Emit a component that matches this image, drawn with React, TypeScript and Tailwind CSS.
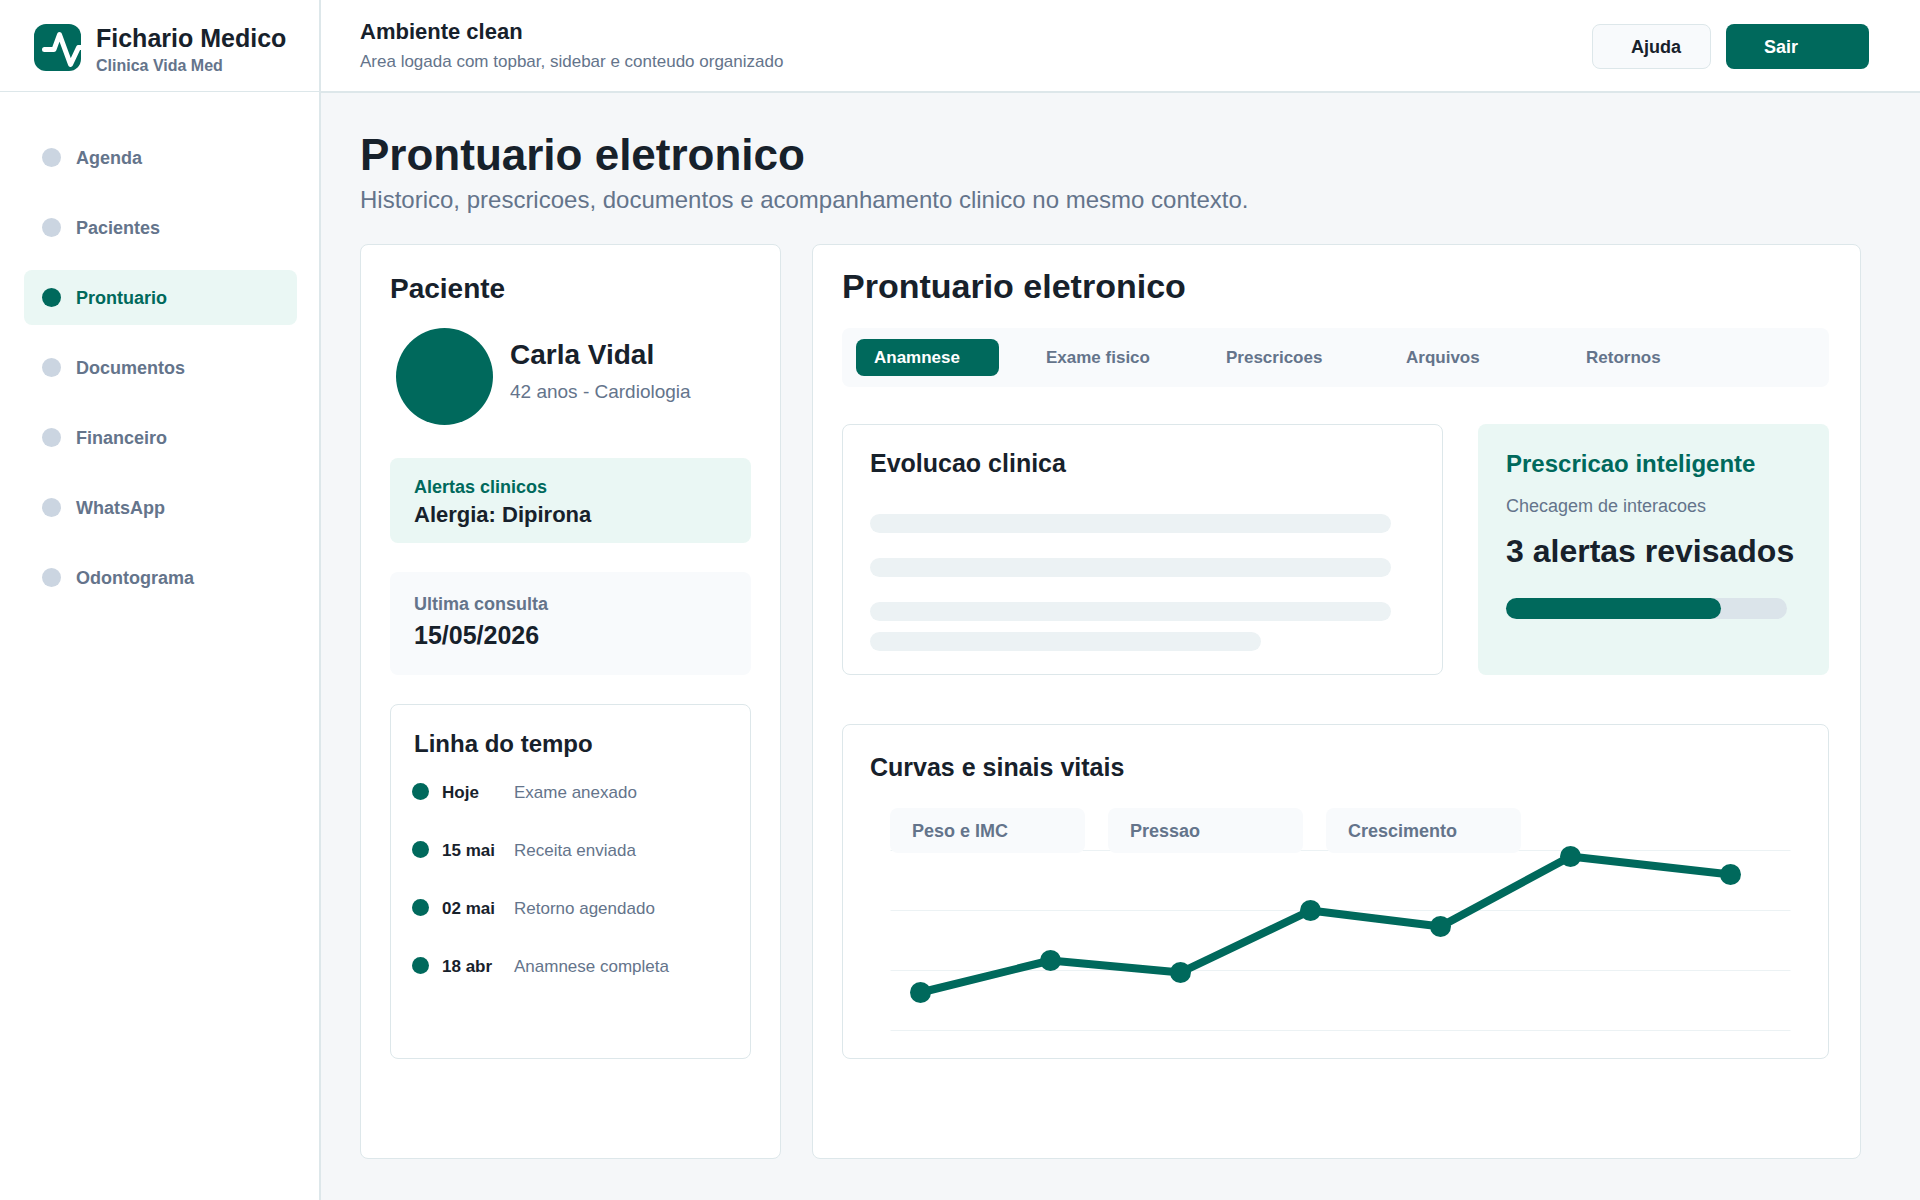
import React from 'react'

const menu = ['Agenda', 'Pacientes', 'Prontuario', 'Documentos', 'Financeiro', 'WhatsApp', 'Odontograma']

const tabs = ['Anamnese', 'Exame fisico', 'Prescricoes', 'Arquivos', 'Retornos']

const timeline = [
  { date: 'Hoje', text: 'Exame anexado' },
  { date: '15 mai', text: 'Receita enviada' },
  { date: '02 mai', text: 'Retorno agendado' },
  { date: '18 abr', text: 'Anamnese completa' },
]

const charts = ['Peso e IMC', 'Pressao', 'Crescimento']

const points = [
  [30, 184],
  [160, 152],
  [290, 164],
  [420, 102],
  [550, 118],
  [680, 48],
  [840, 66],
]

const Logo = () => (
  <svg viewBox="0 0 47 47" className="h-[47px] w-[47px] shrink-0" aria-hidden="true">
    <rect width="47" height="47" rx="12" fill="#00695c" />
    <path
      d="M10.5 25.5H20L25.5 10.5L36.5 40.5L44.5 23.5H47"
      fill="none"
      stroke="#fff"
      strokeWidth="5"
      strokeLinecap="round"
      strokeLinejoin="round"
    />
  </svg>
)

const Sidebar = () => (
  <aside className="w-[321px] shrink-0 border-r-2 border-[#dde7ea] bg-white">
    <div className="flex h-[92px] items-start gap-[15px] border-b border-[#dde7ea] pt-6 pl-[34px]">
      <Logo />
      <div className="leading-7 font-bold whitespace-nowrap">
        <p className="text-[25px]">Fichario Medico</p>
        <p className="text-[16px] text-[#64748b]">Clinica Vida Med</p>
      </div>
    </div>
    <nav className="flex flex-col gap-[15px] pt-[38px] pr-[22px] pl-6">
      {menu.map((item) => {
        const active = item === 'Prontuario'
        return (
          <a
            key={item}
            href="#"
            className={`flex h-[55px] items-center gap-[15px] rounded-lg pl-[18px] text-[18px] font-bold ${
              active ? 'bg-[#eaf7f4] text-[#00695c]' : 'text-[#64748b]'
            }`}
          >
            <span className={`h-[19px] w-[19px] rounded-full ${active ? 'bg-[#00695c]' : 'bg-[#cbd5e1]'}`} />
            <span className="pt-[2px]">{item}</span>
          </a>
        )
      })}
    </nav>
  </aside>
)

const Topbar = () => (
  <header className="flex h-[93px] items-start justify-between border-b-2 border-[#dde7ea] bg-white pr-[51px] pl-[39px]">
    <div className="pt-[17px] leading-[30px]">
      <p className="text-[22px] font-bold">Ambiente clean</p>
      <p className="text-[17px] text-[#64748b]">Area logada com topbar, sidebar e conteudo organizado</p>
    </div>
    <div className="flex gap-[15px] pt-6 text-[18px] font-bold">
      <button className="h-[45px] w-[119px] rounded-lg border border-[#dde7ea] bg-[#f8fafc] pt-[2px] pl-[38px] text-left">
        Ajuda
      </button>
      <button className="h-[45px] w-[143px] rounded-lg bg-[#00695c] pt-[2px] pl-[38px] text-left text-white">
        Sair
      </button>
    </div>
  </header>
)

const Patient = () => (
  <section className="rounded-lg border border-[#dde7ea] bg-white px-[29px] pt-6">
    <h2 className="text-[28px] leading-10 font-bold">Paciente</h2>

    <div className="mt-[19px] ml-[6px] flex gap-[17px]">
      <div className="h-[97px] w-[97px] shrink-0 rounded-full bg-[#00695c]" />
      <div className="pt-2 leading-[37px]">
        <p className="text-[28px] font-bold">Carla Vidal</p>
        <p className="text-[19px] text-[#64748b]">42 anos - Cardiologia</p>
      </div>
    </div>

    <div className="mt-[33px] rounded-lg bg-[#eaf7f4] px-6 pt-[15px] pb-[14px] leading-7 font-bold">
      <p className="text-[18px] text-[#00695c]">Alertas clinicos</p>
      <p className="text-[22px]">Alergia: Dipirona</p>
    </div>

    <div className="mt-[29px] rounded-lg bg-[#f8fafc] px-6 pt-[17px] pb-6 leading-[31px] font-bold">
      <p className="text-[18px] text-[#64748b]">Ultima consulta</p>
      <p className="text-[25px]">15/05/2026</p>
    </div>

    <div className="mt-[29px] rounded-lg border border-[#dde7ea] px-[23px] pt-5 pb-[76px]">
      <h3 className="text-[24px] leading-[38px] font-bold">Linha do tempo</h3>
      <ul className="mt-[11px] -ml-[2px] flex flex-col gap-6 text-[17px] leading-[30px]">
        {timeline.map((item) => (
          <li key={item.date} className="flex items-center">
            <span className="h-[17px] w-[17px] rounded-full bg-[#00695c]" />
            <span className="ml-[13px] w-[72px] pt-1 font-bold">{item.date}</span>
            <span className="pt-1 text-[#64748b]">{item.text}</span>
          </li>
        ))}
      </ul>
    </div>
  </section>
)

const Evolution = () => (
  <div className="min-w-0 flex-1 rounded-lg border border-[#dde7ea] pt-[19px] pr-[51px] pb-[23px] pl-[27px]">
    <h3 className="text-[25px] leading-[38px] font-bold">Evolucao clinica</h3>
    <div className="mt-8 flex flex-col gap-[25px]">
      <div className="h-[19px] rounded-full bg-[#ecf2f4]" />
      <div className="h-[19px] rounded-full bg-[#ecf2f4]" />
      <div className="h-[19px] rounded-full bg-[#ecf2f4]" />
    </div>
    <div className="mt-[11px] h-[19px] w-3/4 rounded-full bg-[#ecf2f4]" />
  </div>
)

const Prescription = () => (
  <div className="w-[351px] shrink-0 rounded-lg bg-[#eaf7f4] px-7 pt-[21px]">
    <h3 className="text-[24px] leading-[38px] font-bold text-[#00695c]">Prescricao inteligente</h3>
    <p className="mt-[7px] text-[18px] leading-8 text-[#64748b]">Checagem de interacoes</p>
    <p className="mt-[9px] text-[32px] leading-10 font-bold whitespace-nowrap">3 alertas revisados</p>
    <div className="mt-[27px] mr-[14px] h-[21px] rounded-full bg-[#dbe4ea]">
      <div className="h-full w-[215px] rounded-full bg-[#00695c]" />
    </div>
  </div>
)

const Vitals = () => (
  <div className="mt-[49px] rounded-lg border border-[#dde7ea] pt-[23px] pr-[37px] pb-[27px] pl-[27px]">
    <h3 className="text-[25px] leading-[38px] font-bold">Curvas e sinais vitais</h3>
    {/* the chips share the grid cell with the chart, so they cover its first line */}
    <div className="mt-[22px] ml-5 grid">
      <svg viewBox="0 0 901 223" className="col-start-1 row-start-1 w-full overflow-visible" aria-hidden="true">
        <g transform="translate(0.5 0.5)">
          {[42, 102, 162, 222].map((y) => (
            <line key={y} x1="0" x2="900" y1={y} y2={y} stroke="#ecf2f4" />
          ))}
          <polyline
            points={points.map((p) => p.join(',')).join(' ')}
            fill="none"
            stroke="#00695c"
            strokeWidth="8"
            strokeLinejoin="round"
          />
          {points.map(([x, y]) => (
            <circle key={x} cx={x} cy={y} r="10.5" fill="#00695c" />
          ))}
        </g>
      </svg>
      <div className="z-10 col-start-1 row-start-1 flex items-start gap-[23px]">
        {charts.map((item) => (
          <button
            key={item}
            className="h-[45px] w-[195px] rounded-lg bg-[#f8fafc] pt-[2px] pl-[22px] text-left text-[18px] font-bold text-[#64748b]"
          >
            {item}
          </button>
        ))}
      </div>
    </div>
  </div>
)

const Record = () => (
  <section className="min-w-0 rounded-lg border border-[#dde7ea] bg-white pt-[21px] pr-[31px] pl-[29px]">
    <h2 className="text-[34px] leading-10 font-bold">Prontuario eletronico</h2>

    <div className="mt-[22px] flex h-[59px] items-center gap-[37px] rounded-lg bg-[#f8fafc] pl-[14px] text-[17px] font-bold">
      {tabs.map((tab) => (
        <button
          key={tab}
          className={`h-[37px] w-[143px] rounded-lg text-left ${
            tab === 'Anamnese' ? 'bg-[#00695c] pl-[18px] text-white' : 'pl-[10px] text-[#64748b]'
          }`}
        >
          {tab}
        </button>
      ))}
    </div>

    <div className="mt-[37px] flex gap-[35px]">
      <Evolution />
      <Prescription />
    </div>

    <Vitals />
  </section>
)

const App = () => {
  return (
    <div className="flex min-h-screen bg-[#f5f7f9] font-['Liberation_Sans',Arial,sans-serif] text-[#17212b]">
      <Sidebar />
      <div className="flex min-w-0 flex-1 flex-col">
        <Topbar />
        <main className="flex flex-1 flex-col pt-9 pr-[59px] pb-[41px] pl-[39px]">
          <h1 className="text-[44px] leading-[52px] font-bold">Prontuario eletronico</h1>
          <p className="text-[24px] leading-[38px] text-[#64748b]">
            Historico, prescricoes, documentos e acompanhamento clinico no mesmo contexto.
          </p>
          <div className="mt-[25px] grid flex-1 grid-cols-[421px_minmax(0,1fr)] gap-[31px]">
            <Patient />
            <Record />
          </div>
        </main>
      </div>
    </div>
  )
}

export default App
